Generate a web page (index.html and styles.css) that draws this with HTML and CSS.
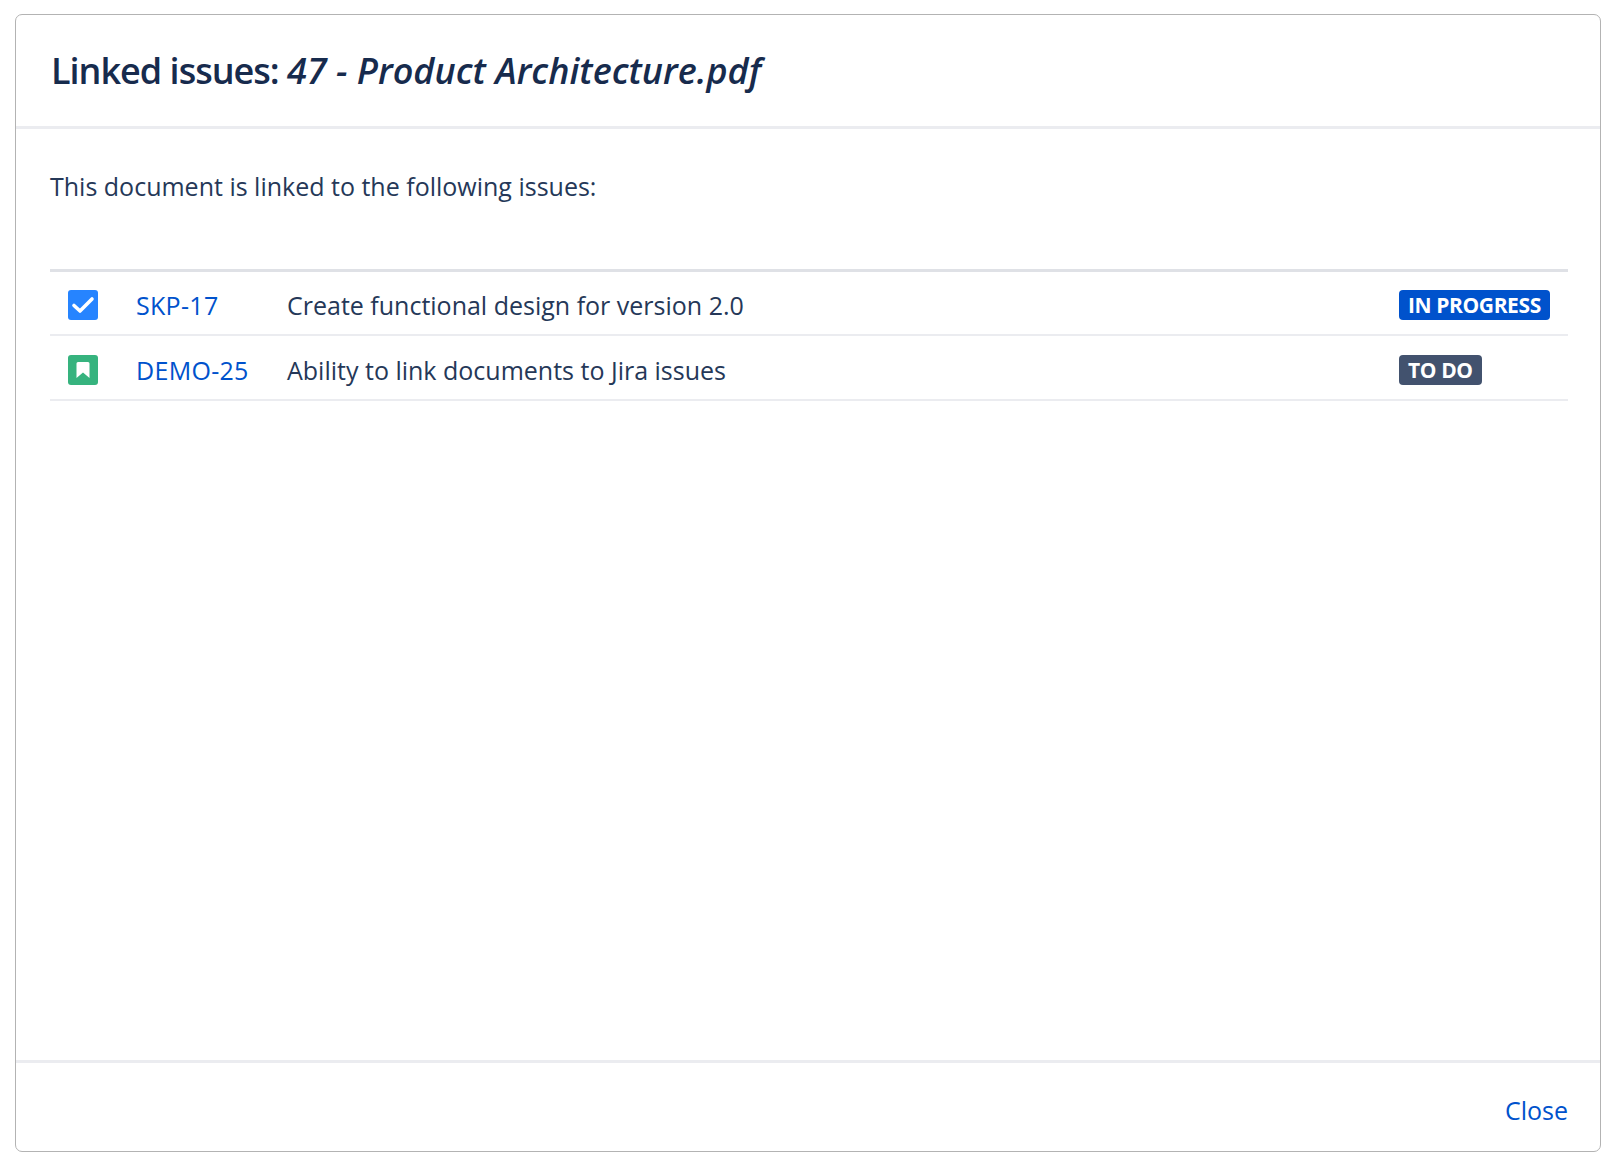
FILE: index.html
```html
<!DOCTYPE html>
<html lang="en">
<head>
    <meta charset="UTF-8">
    <meta name="viewport" content="width=device-width, initial-scale=1.0">
    <title>Linked issues</title>
    <link rel="stylesheet" href="styles.css">
</head>
<body>
    <div class="dialog">
        <div class="dialog-header">
            <h1 class="dialog-title">Linked issues: <em>47 - Product Architecture.pdf</em></h1>
        </div>
        <div class="dialog-body">
            <p class="intro">This document is linked to the following issues:</p>
            <table class="issues">
                <tbody>
                    <tr>
                        <td class="col-type">
                            <svg class="type-icon" viewBox="0 0 30 30">
                                <rect width="30" height="30" rx="3" fill="#2684ff"/>
                                <path d="M6 15.5l6 5.5L24 9" fill="none" stroke="#fff" stroke-width="3.6" stroke-linecap="round" stroke-linejoin="round"/>
                            </svg>
                        </td>
                        <td class="col-key"><a href="#">SKP-17</a></td>
                        <td class="col-summary">Create functional design for version 2.0</td>
                        <td class="col-status"><span class="lozenge lozenge-blue">IN PROGRESS</span></td>
                    </tr>
                    <tr>
                        <td class="col-type">
                            <svg class="type-icon" viewBox="0 0 30 30">
                                <rect width="30" height="30" rx="3" fill="#36b37e"/>
                                <path d="M8.5 8.5A1.5 1.5 0 0 1 10 7h10a1.5 1.5 0 0 1 1.5 1.5V23L15 17.5 8.5 23z" fill="#fff"/>
                            </svg>
                        </td>
                        <td class="col-key"><a href="#">DEMO-25</a></td>
                        <td class="col-summary">Ability to link documents to Jira issues</td>
                        <td class="col-status"><span class="lozenge lozenge-dark">TO DO</span></td>
                    </tr>
                </tbody>
            </table>
        </div>
        <div class="dialog-footer">
            <a href="#" class="close-link">Close</a>
        </div>
    </div>
</body>
</html>
```

FILE: styles.css
```css
body {
    margin: 0;
    padding: 14px 13px 13px 15px;
    height: 1165px;
    box-sizing: border-box;
    background-color: #fff;
    font-family: "Open Sans", "Noto Sans", sans-serif;
    color: #253858;
}

/* Dialog */
.dialog {
    height: 100%;
    box-sizing: border-box;
    display: flex;
    flex-direction: column;
    border: 1px solid #b3b3b3;
    border-radius: 7px;
}

.dialog-header {
    height: 111px;
    padding: 0 32px 0 35px;
    display: flex;
    align-items: center;
    border-bottom: 3px solid #ebecf0;
}

.dialog-title {
    margin: 0;
    font-size: 36px;
    font-weight: 600;
    letter-spacing: -1px;
    color: #172b4d;
}

.dialog-title em {
    letter-spacing: 0;
}

.dialog-body {
    flex: 1;
    padding: 0 32px 0 34px;
}

.intro {
    margin: 40px 0 0;
    font-size: 25px;
    line-height: 35px;
}

/* Issue table */
.issues {
    width: 100%;
    margin-top: 65px;
    border-collapse: collapse;
    border-top: 3px solid #dfe1e6;
    font-size: 25px;
}

.issues td {
    height: 65px;
    padding: 5px 0 0;
    box-sizing: border-box;
    border-bottom: 2px solid #ebecf0;
    vertical-align: middle;
}

.issues tr:first-child td {
    height: 64px;
}

.col-type {
    width: 86px;
    padding-left: 18px !important;
}

.type-icon {
    display: block;
    width: 30px;
    height: 30px;
}

.col-key {
    width: 151px;
    letter-spacing: 0.3px;
}

.col-key a,
.close-link {
    color: #0052cc;
    text-decoration: none;
}

.col-status {
    width: 169px;
}

/* Status lozenges */
.lozenge {
    display: block;
    width: fit-content;
    height: 30px;
    padding: 0 9px;
    line-height: 30px;
    border-radius: 4px;
    color: #fff;
    font-size: 21px;
    font-weight: 700;
    letter-spacing: -0.4px;
}

.lozenge-blue {
    background-color: #0052cc;
}

.lozenge-dark {
    background-color: #42526e;
}

/* Footer */
.dialog-footer {
    height: 82px;
    padding: 6px 32px 0;
    display: flex;
    align-items: center;
    justify-content: flex-end;
    border-top: 3px solid #ebecf0;
}

.close-link {
    font-size: 25px;
}
```
